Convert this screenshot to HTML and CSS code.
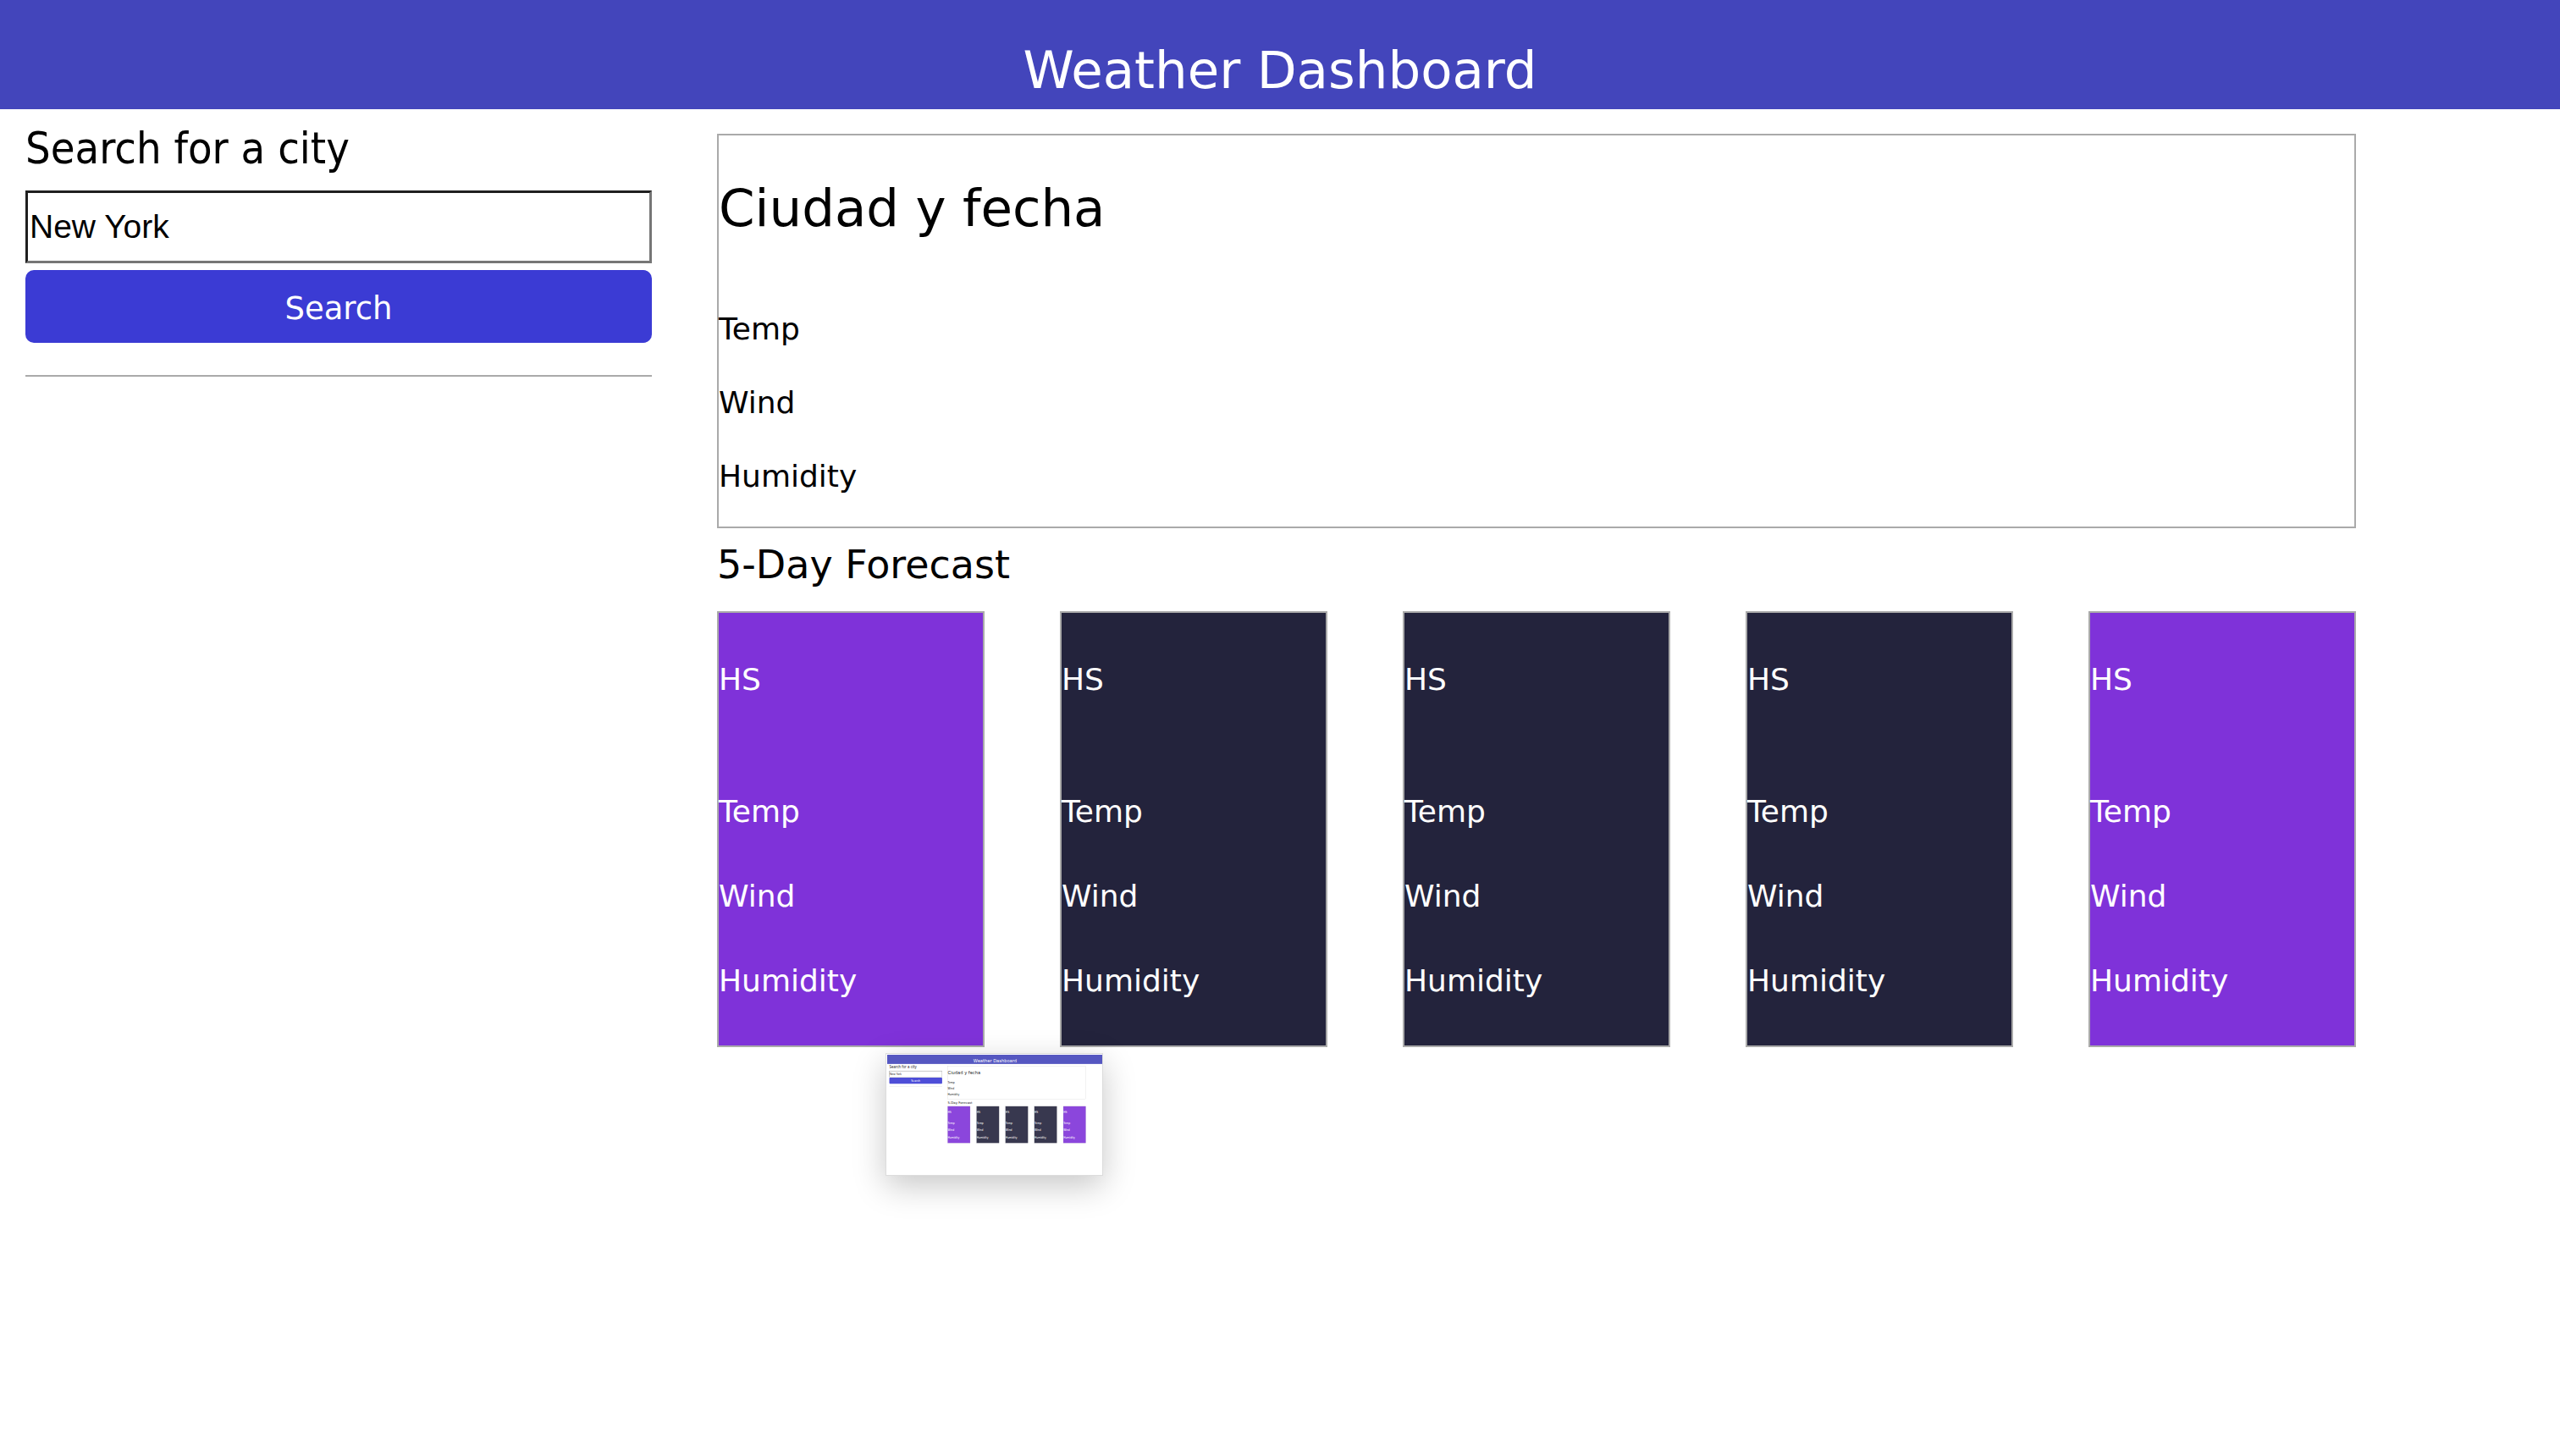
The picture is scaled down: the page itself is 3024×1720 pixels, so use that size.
FILE: index.html
```html
<!DOCTYPE html>
<html lang="en">
<head>
<meta charset="utf-8">
<title>Weather Dashboard</title>
<link rel="stylesheet" href="styles.css">
</head>
<body>
<header class="top-bar"><h1 class="title">Weather Dashboard</h1></header>
<main class="layout">
  <aside class="sidebar">
    <h2 class="search-title">Search for a city</h2>
    <input class="city-input" type="text" value="New York">
    <button class="search-btn" type="button">Search</button>
    <hr class="divider">
  </aside>
  <section class="content">
    <div class="current">
      <h2 class="current-title">Ciudad y fecha</h2>
      <p class="stat">Temp</p>
      <p class="stat">Wind</p>
      <p class="stat">Humidity</p>
    </div>
    <h3 class="forecast-title">5-Day Forecast</h3>
    <div class="cards">
      <div class="card card-purple"><p class="card-date">HS</p><p>Temp</p><p>Wind</p><p>Humidity</p></div>
      <div class="card card-navy"><p class="card-date">HS</p><p>Temp</p><p>Wind</p><p>Humidity</p></div>
      <div class="card card-navy"><p class="card-date">HS</p><p>Temp</p><p>Wind</p><p>Humidity</p></div>
      <div class="card card-navy"><p class="card-date">HS</p><p>Temp</p><p>Wind</p><p>Humidity</p></div>
      <div class="card card-purple"><p class="card-date">HS</p><p>Temp</p><p>Wind</p><p>Humidity</p></div>
    </div>
  </section>
</main>

<div class="thumb" aria-hidden="true">
  <div class="thumb-page">
    <header class="top-bar"><h1 class="title">Weather Dashboard</h1></header>
    <div class="layout">
      <div class="sidebar">
        <h2 class="search-title">Search for a city</h2>
        <div class="city-input fake-input">New York</div>
        <div class="search-btn fake-btn">Search</div>
        <hr class="divider">
      </div>
      <div class="content">
        <div class="current">
          <h2 class="current-title">Ciudad y fecha</h2>
          <p class="stat">Temp</p>
          <p class="stat">Wind</p>
          <p class="stat">Humidity</p>
        </div>
        <h3 class="forecast-title">5-Day Forecast</h3>
        <div class="cards">
          <div class="card card-purple"><p class="card-date">HS</p><p>Temp</p><p>Wind</p><p>Humidity</p></div>
          <div class="card card-navy"><p class="card-date">HS</p><p>Temp</p><p>Wind</p><p>Humidity</p></div>
          <div class="card card-navy"><p class="card-date">HS</p><p>Temp</p><p>Wind</p><p>Humidity</p></div>
          <div class="card card-navy"><p class="card-date">HS</p><p>Temp</p><p>Wind</p><p>Humidity</p></div>
          <div class="card card-purple"><p class="card-date">HS</p><p>Temp</p><p>Wind</p><p>Humidity</p></div>
        </div>
      </div>
    </div>
  </div>
</div>
</body>
</html>
```
FILE: styles.css
```css
* { box-sizing: border-box; }

html, body {
  margin: 0;
  padding: 0;
  background: #ffffff;
}

body {
  position: relative;
  width: 3024px;
  min-height: 1720px;
  font-family: "DejaVu Sans", Verdana, sans-serif;
  color: #000;
}

.top-bar {
  background: #4345bb;
  height: 129px;
  padding-top: 47px;
  text-align: center;
}

.title {
  margin: 0;
  font-size: 61px;
  line-height: 72px;
  font-weight: normal;
  color: #fff;
}

.layout {
  display: flex;
  align-items: flex-start;
  gap: 77px;
  padding-left: 30px;
}

.sidebar {
  width: 740px;
  flex: none;
  display: flex;
  flex-direction: column;
}

.search-title {
  font-family: "DejaVu Sans Condensed", "DejaVu Sans", sans-serif;
  font-size: 52px;
  line-height: 60px;
  font-weight: normal;
  margin: 16px 0 20px;
}

.city-input {
  display: block;
  width: 740px;
  height: 86px;
  margin: 0;
  padding: 0 2px;
  border: 3px solid;
  border-color: #1f1f1f #767676 #767676 #1f1f1f;
  background: #fff;
  color: #000;
  font-family: "Liberation Sans", Arial, sans-serif;
  font-size: 39px;
  outline: none;
}

.search-btn {
  display: block;
  width: 740px;
  height: 86px;
  margin: 8px 0 0;
  padding: 4px 0 0;
  border: none;
  border-radius: 10px;
  background: #3b3bd4;
  color: #fff;
  font-family: "DejaVu Sans", Verdana, sans-serif;
  font-size: 37px;
  text-align: center;
}

.divider {
  width: 100%;
  height: 0;
  margin: 38px 0 0;
  border: none;
  border-top: 2px solid #aaaaaa;
}

.content {
  width: 1936px;
  flex: none;
  margin-top: 29px;
}

.current {
  border: 2px solid #aaaaaa;
  padding: 0 0 38px;
}

.current-title {
  font-size: 61px;
  line-height: 72px;
  font-weight: normal;
  margin: 50px 0 86px;
}

.stat {
  font-size: 36px;
  line-height: 42px;
  margin: 0 0 45px;
}

.stat:last-child { margin-bottom: 0; }

.forecast-title {
  font-size: 46px;
  line-height: 54px;
  font-weight: normal;
  margin: 16px 0 28px;
}

.cards {
  display: flex;
  justify-content: space-between;
}

.card {
  width: 316px;
  height: 515px;
  border: 2px solid #aaaaaa;
  padding: 58px 0 0;
  color: #fff;
  display: flex;
  flex-direction: column;
}

.card p {
  margin: 0;
  font-size: 36px;
  line-height: 42px;
}

.card p + p { margin-top: 58px; }

.card .card-date { margin-bottom: 56px; }

.card-purple { background: #7f32d9; }
.card-navy { background: #23233c; }

/* floating screenshot preview */
.thumb {
  position: absolute;
  left: 1046px;
  top: 1244px;
  width: 257px;
  height: 145px;
  padding: 1px;
  background: #fff;
  border: 1px solid #dcdcdc;
  box-shadow: 0 12px 36px rgba(0, 0, 0, 0.22);
  overflow: hidden;
}

.thumb-page {
  width: 3024px;
  height: 1720px;
  transform: scale(0.0843);
  transform-origin: 0 0;
  opacity: 0.9;
  background: #fff;
}

.fake-input {
  line-height: 80px;
}

.fake-btn {
  line-height: 82px;
}
```
